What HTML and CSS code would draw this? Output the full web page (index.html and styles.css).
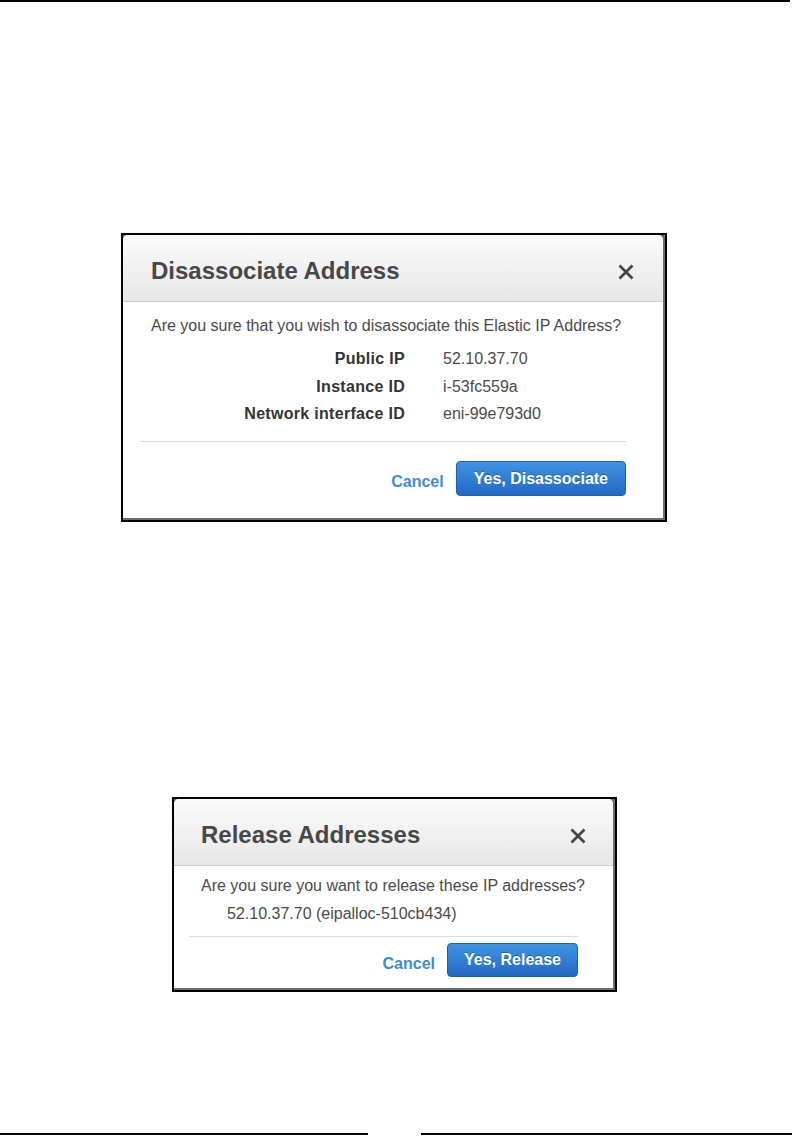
FILE: index.html
```html
<!DOCTYPE html>
<html lang="en">
<head>
    <meta charset="UTF-8">
    <meta name="viewport" content="width=device-width, initial-scale=1.0">
    <title>Elastic IP dialogs</title>
    <link rel="stylesheet" href="styles.css">
</head>
<body>
    <div class="rule-top"></div>

    <div class="shot shot-disassociate">
        <div class="dialog">
            <div class="dialog-header">
                <h2>Disassociate Address</h2>
                <svg class="close" width="16" height="16" viewBox="0 0 16 16"><path d="M1.5 1.5 L14.5 14.5 M14.5 1.5 L1.5 14.5"/></svg>
            </div>
            <div class="dialog-body">
                <p class="question">Are you sure that you wish to disassociate this Elastic IP Address?</p>
                <div class="details">
                    <span class="label">Public IP</span><span class="value">52.10.37.70</span>
                    <span class="label">Instance ID</span><span class="value">i-53fc559a</span>
                    <span class="label">Network interface ID</span><span class="value">eni-99e793d0</span>
                </div>
                <div class="footer">
                    <a class="cancel">Cancel</a>
                    <button class="primary">Yes, Disassociate</button>
                </div>
            </div>
        </div>
    </div>

    <div class="shot shot-release">
        <div class="dialog">
            <div class="dialog-header">
                <h2>Release Addresses</h2>
                <svg class="close" width="16" height="16" viewBox="0 0 16 16"><path d="M1.5 1.5 L14.5 14.5 M14.5 1.5 L1.5 14.5"/></svg>
            </div>
            <div class="dialog-body">
                <p class="question">Are you sure you want to release these IP addresses?</p>
                <p class="item">52.10.37.70 (eipalloc-510cb434)</p>
                <div class="footer">
                    <a class="cancel">Cancel</a>
                    <button class="primary">Yes, Release</button>
                </div>
            </div>
        </div>
    </div>

    <div class="rule-bottom">
        <div class="rule-left"></div>
        <div class="rule-right"></div>
    </div>
</body>
</html>
```

FILE: styles.css
```css
body { margin: 0; background: #fff; font-family: "Liberation Sans", Arial, sans-serif; color: #444; }
.rule-top { height: 2px; width: 790px; background: #000; }
.rule-bottom { display: flex; justify-content: space-between; margin-top: 141px; }
.rule-left { width: 368px; height: 2px; background: #000; }
.rule-right { width: 371px; height: 2px; background: #000; }

.shot { border: 2px solid #000; background: #6d6d6d; padding: 0 2px 2px 0; }
.shot-disassociate { width: 540px; margin: 231px 0 0 121px; }
.shot-release { width: 439px; margin: 275px 0 0 172px; }

.dialog { background: #fff; border-radius: 5px 5px 0 0; overflow: hidden; }
.dialog-header { height: 61px; padding: 5px 29px 0 28px; display: flex; align-items: center; justify-content: space-between; background: linear-gradient(#fbfbfb, #e7e7e7); border-bottom: 1px solid #cdcdcd; }
.dialog-header h2 { margin: 0; font-size: 24px; font-weight: bold; color: #474747; }
.close { stroke: #444; stroke-width: 2.7; fill: none; margin-top: 3px; }

.dialog-body p { margin: 0; font-size: 16px; line-height: 20px; }
.question { color: #4a4a4a; }

.shot-disassociate .dialog-body { padding: 14px 0 22px; }
.shot-disassociate .question { padding-left: 28px; }
.details { display: grid; grid-template-columns: 254px auto; column-gap: 38px; row-gap: 7.5px; margin: 13px 0 0 28px; font-size: 16px; line-height: 20px; }
.label { text-align: right; font-weight: bold; color: #333; letter-spacing: 0.3px; }
.value { color: #4a4a4a; }
.shot-disassociate .footer { margin: 17px 37px 0 17px; padding-top: 19px; }
.shot-disassociate .primary { height: 35px; padding: 0 17px; }

.shot-release .dialog-header { padding: 5px 27px 0 27px; }
.shot-release .dialog-body { padding: 10px 0 11px; }
.shot-release .question { padding-left: 27px; }
.item { margin-top: 8px !important; padding-left: 53px; color: #4a4a4a; }
.shot-release .footer { margin: 12px 35px 0 15px; padding-top: 6px; }
.shot-release .primary { height: 34px; padding: 0 16px; }

.footer { border-top: 1px solid #dcdcdc; display: flex; justify-content: flex-end; align-items: center; gap: 12px; }
.cancel { color: #3d8cda; font-weight: bold; font-size: 16px; padding-top: 7px; cursor: pointer; }
.primary { font-family: "Liberation Sans", Arial, sans-serif; font-size: 16px; font-weight: bold; color: #fff; background: linear-gradient(#3f93e4, #2369c4); border: 1px solid #1f5eab; border-radius: 4px; text-shadow: 0 -1px 0 rgba(0,0,0,0.25); cursor: pointer; }
```
